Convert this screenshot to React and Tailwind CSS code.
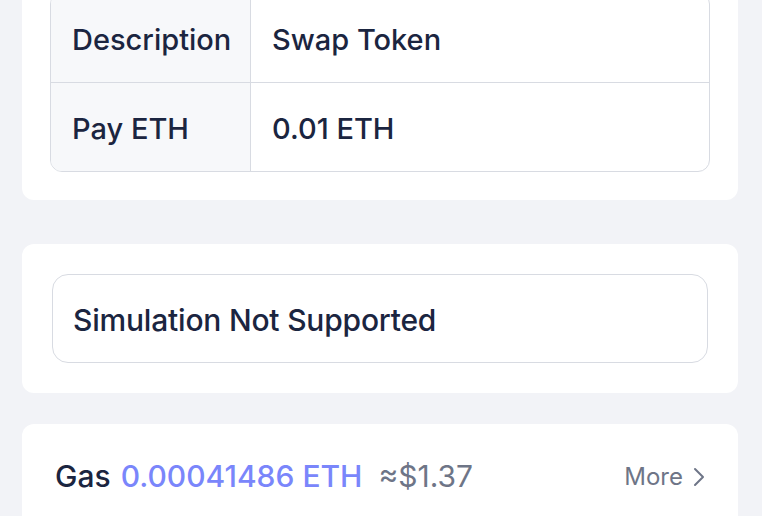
import React from "react";

const rows = [
  { label: "Description", value: "Swap Token" },
  { label: "Pay ETH", value: "0.01 ETH" },
];

export default function App() {
  return (
    <div
      className="min-h-[516px] w-[762px] overflow-hidden bg-[#f2f3f7] pl-[22px] pr-[24px] text-[#1b2540]"
      style={{ fontFamily: "Inter, 'Noto Sans', sans-serif" }}
    >
      {/* ----------- TX DETAILS ----------- */}
      <div className="-mt-[38px] rounded-[12px] bg-white pl-[28px] pr-[28px] pt-[30px] pb-[28px]">
        <div className="overflow-hidden rounded-[12px] border border-[#d8dbe2]">
          {rows.map((r, i) => (
            <div
              key={r.label}
              className={`flex h-[89px] ${i > 0 ? "border-t border-[#d8dbe2]" : ""}`}
            >
              <div className="flex w-[200px] shrink-0 items-center border-r border-[#d8dbe2] bg-[#f7f8fa] pl-[21px] pt-[4px] text-[29px] font-medium">
                {r.label}
              </div>
              <div className="flex items-center pl-[21px] pt-[4px] text-[29px] font-medium">
                {r.value}
              </div>
            </div>
          ))}
        </div>
      </div>

      {/* ----------- SIMULATION ----------- */}
      <div className="mt-[44px] rounded-[12px] bg-white pl-[30px] pr-[30px] py-[30px]">
        <div className="flex h-[89px] items-center rounded-[16px] border border-[#d8dbe2] pl-[20px] pt-[4px] text-[30px] font-medium tracking-[-0.2px]">
          Simulation Not Supported
        </div>
      </div>

      {/* ----------- GAS ----------- */}
      <div className="mt-[31px] h-[140px] rounded-[12px] bg-white pl-[33px] pr-[33px] pt-[30px]">
        <div className="flex items-center justify-between">
          <div className="flex items-baseline text-[30px] font-medium">
            <span>Gas</span>
            <span className="ml-[10px] text-[#7a86fb]">0.00041486 ETH</span>
            <span className="ml-[16px] font-normal text-[#6e7587]">≈$1.37</span>
          </div>
          <div className="flex items-center gap-[10px] text-[24px] text-[#6e7587]">
            <span>More</span>
            <svg width="12" height="20" viewBox="0 0 12 20" fill="none">
              <path d="M2 2l8 8-8 8" stroke="#6e7587" strokeWidth="2" strokeLinecap="round" strokeLinejoin="round" />
            </svg>
          </div>
        </div>
      </div>
    </div>
  );
}
